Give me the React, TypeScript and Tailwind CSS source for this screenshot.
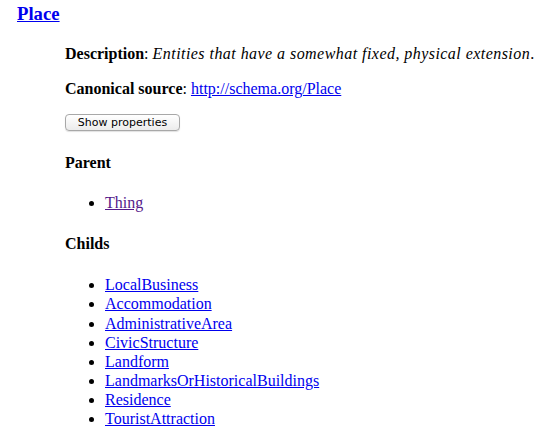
import React from 'react';

const childs = [
  'LocalBusiness',
  'Accommodation',
  'AdministrativeArea',
  'CivicStructure',
  'Landform',
  'LandmarksOrHistoricalBuildings',
  'Residence',
  'TouristAttraction',
];

const linkCls = 'text-[#0000ee] underline';

export default function App() {
  return (
    <div className="min-h-screen bg-white text-black font-['Liberation_Serif',_'Times_New_Roman',_serif] text-[16px] leading-[19.15px] pl-[17px] pt-[3px]">
      {/* Title */}
      <h3 className="text-[18.72px] leading-[21.5px] font-bold mb-[19.5px]">
        <a href="#" className={linkCls}>Place</a>
      </h3>

      <div className="ml-[48px]">
        <p className="mb-[16px]">
          <b>Description</b>: <i className="tracking-[0.45px]">Entities that have a somewhat fixed, physical extension</i>.
        </p>
        <p className="mb-[16px]">
          <b>Canonical source</b>: <a href="#" className={linkCls}>http://schema.org/Place</a>
        </p>
        <div className="h-[18px] mb-[21px] flex items-start">
          <button className="w-[115px] h-[17px] rounded-[4px] border border-[#a8a8a8] bg-gradient-to-b from-white to-[#ececec] shadow-[0_1px_1px_rgba(0,0,0,0.12)] font-['DejaVu_Sans',_'Liberation_Sans',_sans-serif] text-[11px] leading-[15px] text-black">
            Show properties
          </button>
        </div>

        {/* Parent */}
        <h4 className="font-bold mb-[21px]">Parent</h4>
        <ul className="list-disc pl-[40px] mb-[21.5px]">
          <li>
            <a href="#" className="text-[#551a8b] underline">Thing</a>
          </li>
        </ul>

        {/* Childs */}
        <h4 className="font-bold mb-[22px]">Childs</h4>
        <ul className="list-disc pl-[40px]">
          {childs.map((c) => (
            <li key={c}>
              <a href="#" className={linkCls}>{c}</a>
            </li>
          ))}
        </ul>
      </div>
    </div>
  );
}
